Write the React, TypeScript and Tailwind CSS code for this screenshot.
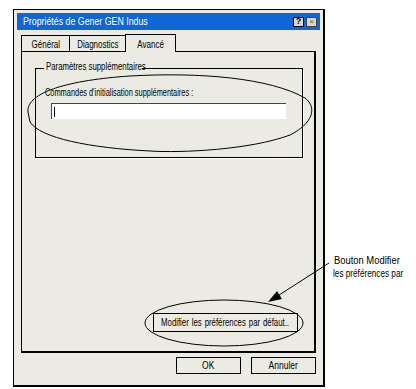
import React from 'react';

const font = { fontFamily: '"Liberation Sans", Arial, sans-serif' };

function Tab({ label, active, width }: { label: string; active?: boolean; width: string }) {
    if (active) {
        return (
            <div className={`relative z-10 -ml-px flex h-[18px] items-start justify-center border border-b-0 border-black bg-[#ECEBE3] pt-[2px] text-[10px] ${width}`}>
                <span className="inline-block scale-x-[0.8] whitespace-nowrap">{label}</span>
            </div>
        );
    }
    return (
        <div className={`-ml-px flex h-[17px] items-start justify-center border border-b-0 border-black pt-[1px] text-[10px] first:ml-0 ${width}`}>
            <span className="inline-block scale-x-[0.8] whitespace-nowrap">{label}</span>
        </div>
    );
}

export default function App() {
    return (
        <div className="relative h-[389px] w-[416px] overflow-hidden bg-white pl-[13px] pt-[9px] text-black" style={font}>
            {/* Fenêtre */}
            <div className="flex h-[378px] w-[312px] flex-col border border-b-2 border-r-2 border-black bg-[#ECEBE3] p-[3px]">
                {/* Barre de titre */}
                <div className="flex h-[17px] items-center justify-between bg-[#1166D6] pl-[6px] pr-[3px]">
                    <span className="inline-block origin-left scale-x-[0.8] whitespace-nowrap text-[11px] leading-none text-white">Propriétés de Gener GEN Indus</span>
                    <div className="flex gap-[2px]">
                        <div className="flex h-[10px] w-[11px] items-center justify-center border border-black bg-[#D8D6CE] text-[9px] font-bold leading-none">?</div>
                        <div className="flex h-[10px] w-[11px] items-center justify-center border border-[#444] bg-[#D8D6CE] text-[8px] leading-none text-[#555]">×</div>
                    </div>
                </div>

                {/* Onglets */}
                <div className="ml-[4px] mt-[4px] flex items-end">
                    <Tab label="Général" width="w-[49px]" />
                    <Tab label="Diagnostics" width="w-[57px]" />
                    <Tab label="Avancé" width="w-[51px]" active />
                </div>

                {/* Panneau */}
                <div className="-mt-px ml-[4px] flex h-[302px] w-[295px] flex-col border border-b-2 border-r-2 border-black">
                    <div className="relative ml-[13px] mt-[16px] h-[90px] w-[268px] border border-black shadow-[1px_1px_0_#ffffff]">
                        <span className="absolute -top-[7px] left-[8px] w-[98px] bg-[#ECEBE3] px-[2px] text-[10px] leading-none">
                            <span className="inline-block origin-left scale-x-[0.78] whitespace-nowrap">Paramètres supplémentaires</span>
                        </span>
                        <div className="ml-[9px] mt-[19px] text-[10px] leading-none">
                            <span className="inline-block origin-left scale-x-[0.74] whitespace-nowrap">Commandes d'initialisation supplémentaires :</span>
                        </div>
                        <div className="ml-[15px] mt-[5px] flex h-[16px] w-[235px] items-center border-l border-t border-[#444] bg-white pl-[2px]">
                            <div className="h-[10px] w-px bg-black" />
                        </div>
                    </div>
                    <button className="mb-[19px] mr-[16px] mt-auto flex h-[19px] w-[145px] items-center justify-center self-end border border-black text-[10px]">
                        <span className="inline-block scale-x-[0.78] whitespace-nowrap [word-spacing:1px]">Modifier les préférences par défaut..</span>
                    </button>
                </div>

                {/* Boutons */}
                <div className="ml-[4px] mt-[4px] flex w-[295px] justify-end gap-[10px]">
                    <button className="flex h-[17px] w-[65px] items-center justify-center border border-black text-[10px]">
                        <span className="inline-block scale-x-[0.85]">OK</span>
                    </button>
                    <button className="flex h-[17px] w-[65px] items-center justify-center border border-black text-[10px]">
                        <span className="inline-block scale-x-[0.85]">Annuler</span>
                    </button>
                </div>
            </div>

            {/* Annotation */}
            <div className="absolute left-[333px] top-[254px] whitespace-nowrap text-[10px] leading-[13px]">
                <div className="origin-left scale-x-[0.94] pl-px">Bouton Modifier</div>
                <div className="origin-left scale-x-[0.82]">les préférences par</div>
            </div>

            <svg className="pointer-events-none absolute left-0 top-0" width="416" height="389" viewBox="0 0 416 389">
                <path
                    d="M 28 112 C 26 92, 70 80, 130 76 C 200 72, 270 78, 305 98 C 318 108, 312 124, 290 135 C 250 150, 180 153, 150 151 C 90 148, 40 138, 30 122 Z"
                    fill="none"
                    stroke="black"
                    strokeWidth="1"
                />
                <ellipse cx="224" cy="323" rx="79" ry="23" fill="none" stroke="black" strokeWidth="1" />
                <line x1="329" y1="263" x2="276" y2="297" stroke="black" strokeWidth="1" />
                <polygon points="268,302 277,291 282,299" fill="black" />
            </svg>
        </div>
    );
}
